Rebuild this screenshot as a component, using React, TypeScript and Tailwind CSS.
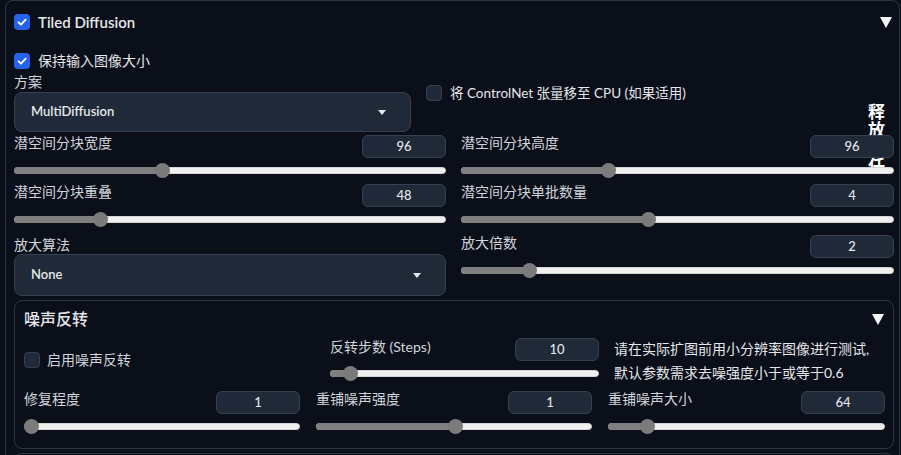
import React from "react";

const Check = ({ checked }: { checked: boolean }) =>
  checked ? (
    <div className="w-[16px] h-[16px] shrink-0 rounded-[4px] bg-[#2563eb] flex items-center justify-center">
      <svg width="12" height="12" viewBox="0 0 12 12">
        <path d="M2.5 6.3 L5 8.6 L9.6 3.6" fill="none" stroke="white" strokeWidth="1.8" strokeLinecap="round" strokeLinejoin="round" />
      </svg>
    </div>
  ) : (
    <div className="w-[16px] h-[16px] shrink-0 rounded-[4px] bg-[#1f2937] border border-[#374151]" />
  );

const Tri = () => (
  <svg width="12" height="11" viewBox="0 0 12 11">
    <path d="M0 0 H12 L6 11 Z" fill="#f3f4f6" />
  </svg>
);

const Caret = () => (
  <svg width="8" height="5" viewBox="0 0 8 5">
    <path d="M0 0 H8 L4 5 Z" fill="#e5e7eb" />
  </svg>
);

const Slider = ({ pos }: { pos: number }) => (
  <div className="relative h-[15px]">
    <div className="absolute left-0 right-0 top-[4px] h-[7px] rounded-full bg-[#efefef] border border-[#d4d4d4]" />
    <div className="absolute left-0 top-[4px] h-[7px] rounded-l-full bg-[#7f7f7f]" style={{ width: pos }} />
    <div className="absolute top-0 w-[15px] h-[15px] rounded-full bg-[#7b7b7b]" style={{ left: pos - 7.5 }} />
  </div>
);

const NumBox = ({ v }: { v: string }) => (
  <div className="w-[84px] h-[23px] rounded-[6px] bg-[#1f2937] border border-[#374151] flex items-center justify-center text-[13px] font-medium text-[#e5e7eb]">
    {v}
  </div>
);

const Block = ({ label, v, pos }: { label: string; v: string; pos: number }) => (
  <div className="flex flex-col">
    <div className="flex justify-between items-start h-[23px]">
      <span className="text-[14px] leading-[16px] text-[#d1d5db]">{label}</span>
      <NumBox v={v} />
    </div>
    <div className="mt-[5px]">
      <Slider pos={pos} />
    </div>
  </div>
);

export default function App() {
  return (
    <div className="w-[901px] h-[455px] overflow-hidden bg-[#0b0f19] font-['Lato','Noto_Sans_CJK_SC',sans-serif] text-[#e5e7eb]">
      <div className="relative ml-[5px] mr-[1px] rounded-lg border border-[#2e3542] pl-[8px] pr-[5px] pt-[13px] pb-[20px]">
        {/* overlay vertical text behind content */}
        <div className="absolute left-[860px] top-[102px] z-0 [writing-mode:vertical-rl] text-[17px] leading-[18px] tracking-[1px] font-bold text-white whitespace-nowrap">
          释放　任
        </div>

        <div className="relative z-10">
          {/* header */}
          <div className="flex items-center h-[16px]">
            <Check checked />
            <span className="ml-[8px] text-[15px] font-semibold leading-[16px] text-[#e5e7eb]">Tiled Diffusion</span>
            <div className="ml-auto mr-[2px]">
              <Tri />
            </div>
          </div>

          <div className="mt-[23px] flex items-center h-[16px]">
            <Check checked />
            <span className="ml-[8px] text-[14px] leading-[16px] text-[#e5e7eb]">保持输入图像大小</span>
          </div>

          {/* scheme row */}
          <div className="mt-[5px] flex">
            <div className="w-[397px] flex flex-col">
              <span className="text-[14px] leading-[16px] text-[#d1d5db]">方案</span>
              <div className="mt-[2px] h-[40px] rounded-lg bg-[#1f2937] border border-[#374151] flex items-center justify-between pl-[16px] pr-[24px]">
                <span className="text-[13px] font-semibold text-[#e5e7eb]">MultiDiffusion</span>
                <Caret />
              </div>
            </div>
            <div className="ml-[15px] mt-[11px] flex items-start">
              <Check checked={false} />
              <span className="ml-[8px] text-[13.5px] leading-[16px] text-[#e5e7eb]">将 ControlNet 张量移至 CPU (如果适用)</span>
            </div>
          </div>

          {/* two column grid */}
          <div className="mt-[3px] grid grid-cols-[432px_433px] gap-x-[15px]">
            <div className="flex flex-col gap-[6px]">
              <Block label="潜空间分块宽度" v="96" pos={148} />
              <Block label="潜空间分块重叠" v="48" pos={86} />
              <div className="mt-[4px] flex flex-col">
                <span className="text-[14px] leading-[16px] text-[#d1d5db]">放大算法</span>
                <div className="mt-[1px] h-[42px] rounded-lg bg-[#1f2937] border border-[#374151] flex items-center justify-between pl-[16px] pr-[24px]">
                  <span className="text-[13px] font-semibold text-[#e5e7eb]">None</span>
                  <Caret />
                </div>
              </div>
            </div>
            <div className="flex flex-col gap-[6px]">
              <Block label="潜空间分块高度" v="96" pos={147} />
              <Block label="潜空间分块单批数量" v="4" pos={187} />
              <div className="mt-[2px]">
                <Block label="放大倍数" v="2" pos={68} />
              </div>
            </div>
          </div>

          {/* noise inversion panel */}
          <div className="mt-[4px] rounded-lg border border-[#2e3542] pl-[9px] pr-[8px] pt-[8px] pb-[14px]">
            <div className="flex items-center justify-between h-[20px]">
              <span className="text-[16px] leading-[20px] font-medium text-[#e5e7eb]">噪声反转</span>
              <div className="mr-[1px]">
                <Tri />
              </div>
            </div>

            <div className="mt-[9px] flex h-[43px]">
              <div className="w-[291px] pt-[14px] flex items-start">
                <Check checked={false} />
                <span className="ml-[7px] text-[14px] leading-[16px] text-[#d1d5db]">启用噪声反转</span>
              </div>
              <div className="ml-[15px] w-[269px] flex flex-col">
                <div className="flex justify-between items-start h-[23px]">
                  <span className="pt-[1px] text-[14px] leading-[16px] text-[#d1d5db]">反转步数 (Steps)</span>
                  <NumBox v="10" />
                </div>
                <div className="mt-[5px]">
                  <Slider pos={20} />
                </div>
              </div>
              <div className="ml-[15px] w-[271px] -mt-[1px] text-[14px] leading-[24px] text-[#e5e7eb] whitespace-nowrap">
                <div>请在实际扩图前用小分辨率图像进行测试,</div>
                <div>默认参数需求去噪强度小于或等于0.6</div>
              </div>
            </div>

            <div className="mt-[10px] grid grid-cols-[276px_276px_277px] gap-x-[16px]">
              <Block label="修复程度" v="1" pos={7.5} />
              <Block label="重铺噪声强度" v="1" pos={139} />
              <Block label="重铺噪声大小" v="64" pos={39} />
            </div>
          </div>

          <div className="mt-[4px] h-[30px] rounded-t-lg border-t border-x border-[#2e3542]" />
        </div>
      </div>
    </div>
  );
}
